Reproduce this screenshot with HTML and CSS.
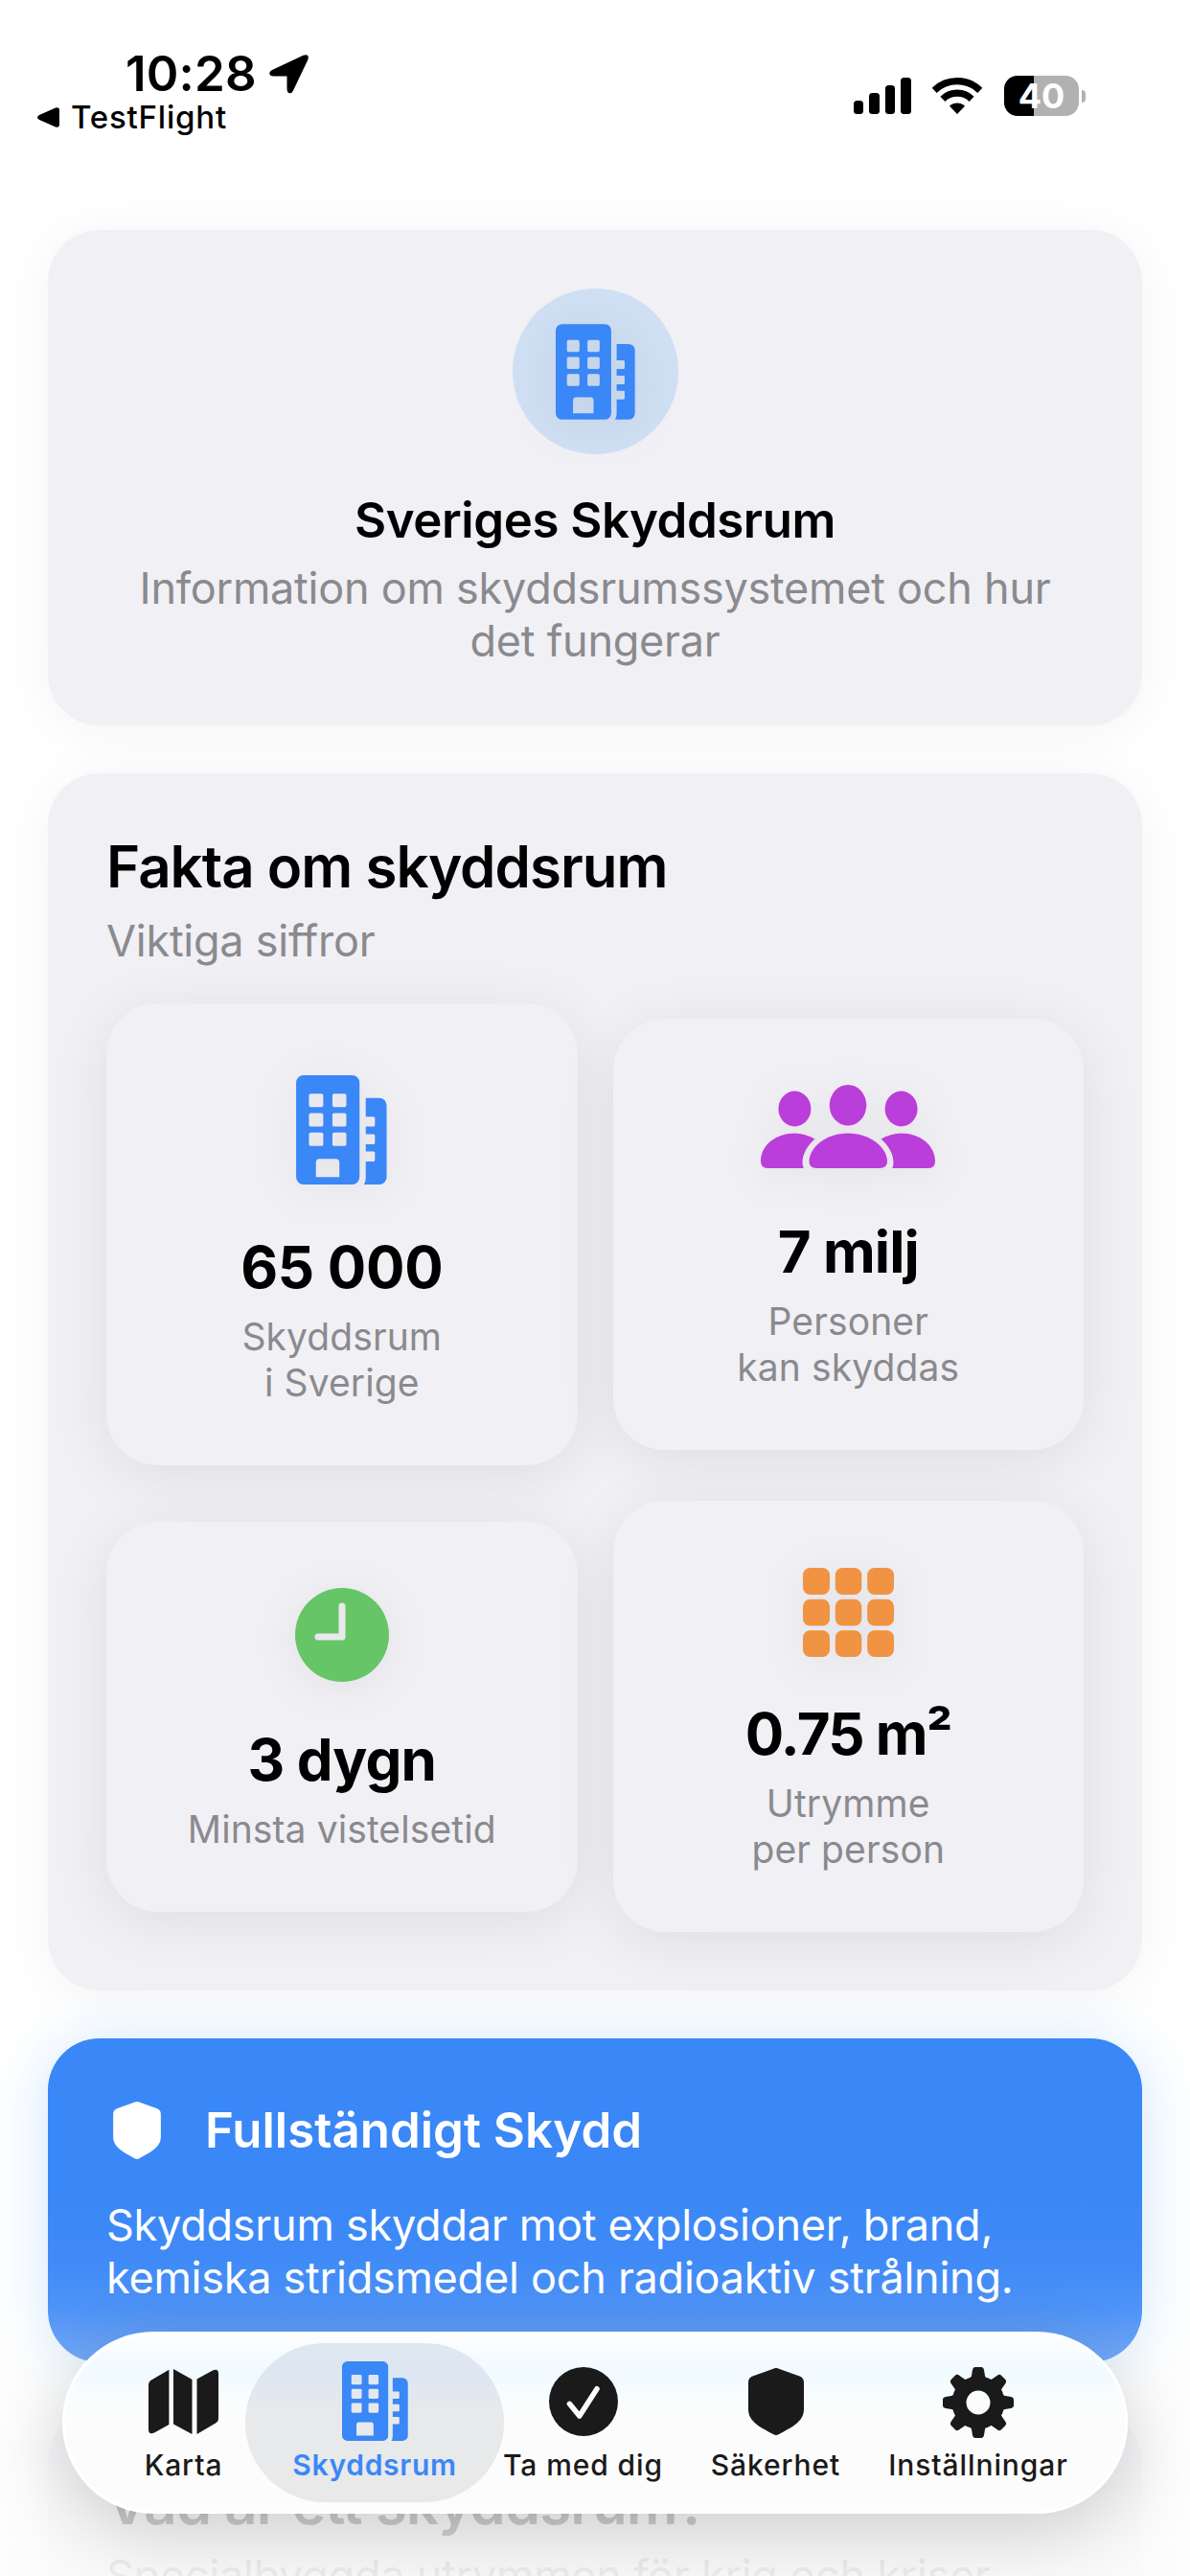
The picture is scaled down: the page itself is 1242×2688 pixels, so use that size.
FILE: index.html
```html
<!DOCTYPE html>
<html lang="sv">
<head>
<meta charset="UTF-8">
<meta name="viewport" content="width=device-width, initial-scale=1.0">
<title>Skyddsrum</title>
<link rel="stylesheet" href="styles.css">
</head>
<body>

<!-- Shared icons -->
<svg class="icon-defs">
    <symbol id="icon-building" viewBox="0 0 248 298">
        <path fill-rule="evenodd" d="M20 0H153a20 20 0 0 1 20 20V278a20 20 0 0 1-20 20H20a20 20 0 0 1-20-20V20A20 20 0 0 1 20 0ZM40 50a5 5 0 0 0-5 5v27a5 5 0 0 0 5 5h29a5 5 0 0 0 5-5v-27a5 5 0 0 0-5-5ZM104 50a5 5 0 0 0-5 5v27a5 5 0 0 0 5 5h28a5 5 0 0 0 5-5v-27a5 5 0 0 0-5-5ZM40 103a5 5 0 0 0-5 5v27a5 5 0 0 0 5 5h29a5 5 0 0 0 5-5v-27a5 5 0 0 0-5-5ZM104 103a5 5 0 0 0-5 5v27a5 5 0 0 0 5 5h28a5 5 0 0 0 5-5v-27a5 5 0 0 0-5-5ZM40 156a5 5 0 0 0-5 5v27a5 5 0 0 0 5 5h29a5 5 0 0 0 5-5v-27a5 5 0 0 0-5-5ZM104 156a5 5 0 0 0-5 5v27a5 5 0 0 0 5 5h28a5 5 0 0 0 5-5v-27a5 5 0 0 0-5-5ZM64 228a10 10 0 0 0-10 10v40h64v-40a10 10 0 0 0-10-10Z"/>
        <path d="M190 62H227a20 20 0 0 1 20 20V278a20 20 0 0 1-20 20H185q5-8 5-18V235h21a4 4 0 0 0 4-4v-19a4 4 0 0 0-4-4h-21v-20h21a4 4 0 0 0 4-4v-19a4 4 0 0 0-4-4h-21v-21h21a4 4 0 0 0 4-4v-19a4 4 0 0 0-4-4h-21Z"/>
    </symbol>
    <symbol id="icon-shield" viewBox="0 0 58 70">
        <path d="M25.500 1Q29-.8 32.500 1L53.500 8.500Q58 10.300 58 15V43C58 56 45 62 32 69Q29 70.800 26 69C13 62 0 56 0 43V15Q0 10.300 4.500 8.500Z"/>
    </symbol>
</svg>

<header class="status-bar">
    <div class="status-left">
        <div class="clock">
            <span class="time">10:28</span>
            <svg class="location" viewBox="0 0 41 41"><path d="M2.500 16.200 35.500.7Q42-1.500 40.500 5L25 37.500Q23.500 41 20.500 40 18.500 39 18.500 36V22.500H4Q1 22.500.3 20 0 17.500 2.500 16.200Z"/></svg>
        </div>
        <div class="back-app">
            <svg class="back-arrow" viewBox="0 0 23 21"><path d="M2 8 19 .5Q23-.5 23 3V18Q23 21.500 19 20.500L2 13Q-2 10.500 2 8Z"/></svg>
            <span>TestFlight</span>
        </div>
    </div>
    <div class="status-right">
        <svg class="signal" viewBox="0 0 60 38">
            <rect x="0" y="24" width="10" height="14" rx="3.500"/>
            <rect x="16" y="16" width="11" height="22" rx="3.500"/>
            <rect x="33" y="8" width="10" height="30" rx="3.500"/>
            <rect x="49" y="0" width="11" height="38" rx="3.500"/>
        </svg>
        <svg class="wifi" viewBox="0 0 52 38">
            <path class="wifi-arc" d="M2.200 13.300A34.300 34.300 0 0 1 49.800 13.300"/>
            <path class="wifi-arc" d="M10.900 22.300A21.800 21.800 0 0 1 41.100 22.300"/>
            <path d="M26 38 18 29.700A11.500 11.500 0 0 1 34 29.700Z"/>
        </svg>
        <div class="battery">40</div>
        <div class="battery-tip"></div>
    </div>
</header>

<main>
    <section class="card intro">
        <div class="intro-icon">
            <svg><use href="#icon-building"/></svg>
        </div>
        <h1>Sveriges Skyddsrum</h1>
        <p class="lead">Information om skyddsrumssystemet och hur<br>det fungerar</p>
    </section>

    <section class="card facts">
        <h2>Fakta om skyddsrum</h2>
        <p class="lead">Viktiga siffror</p>
        <div class="fact-grid">
            <div class="fact">
                <svg class="fact-building"><use href="#icon-building"/></svg>
                <strong>65 000</strong>
                <span>Skyddsrum<br>i Sverige</span>
            </div>
            <div class="fact">
                <svg class="fact-people" viewBox="0 0 182 87">
                    <ellipse cx="91" cy="21.300" rx="19.300" ry="21.300"/>
                    <path d="M58 87Q50.500 87 50.500 80C50.500 66 67 50.500 91 50.500S132 66 132 80Q132 87 124 87Z"/>
                    <g id="person">
                        <ellipse cx="35.400" cy="25" rx="17" ry="18.500"/>
                        <path d="M7 87Q0 87 0 79.500C0 63 16 50.500 35.400 50.500 43 50.500 50 53 56.500 56.500 49 63 43.500 72 43.500 81Q43.500 84.500 44.800 87Z"/>
                    </g>
                    <use href="#person" transform="matrix(-1 0 0 1 182 0)"/>
                </svg>
                <strong class="tight">7 milj</strong>
                <span>Personer<br>kan skyddas</span>
            </div>
            <div class="fact">
                <svg class="fact-clock" viewBox="0 0 98 98">
                    <circle cx="49" cy="49" r="49"/>
                    <path d="M49 19V51H24"/>
                </svg>
                <strong class="tight">3 dygn</strong>
                <span>Minsta vistelsetid</span>
            </div>
            <div class="fact">
                <svg class="fact-area" viewBox="0 0 95 93">
                    <rect x="0" y="0" width="28" height="28" rx="7.500"/>
                    <rect x="33.800" y="0" width="27.500" height="28" rx="7.500"/>
                    <rect x="67.200" y="0" width="27.800" height="28" rx="7.500"/>
                    <rect x="0" y="32.700" width="28" height="27.700" rx="7.500"/>
                    <rect x="33.800" y="32.700" width="27.500" height="27.700" rx="7.500"/>
                    <rect x="67.200" y="32.700" width="27.800" height="27.700" rx="7.500"/>
                    <rect x="0" y="65.300" width="28" height="27.700" rx="7.500"/>
                    <rect x="33.800" y="65.300" width="27.500" height="27.700" rx="7.500"/>
                    <rect x="67.200" y="65.300" width="27.800" height="27.700" rx="7.500"/>
                </svg>
                <strong class="tighter">0.75 m²</strong>
                <span>Utrymme<br>per person</span>
            </div>
        </div>
    </section>

    <section class="card protection">
        <div class="protection-title">
            <svg><use href="#icon-shield"/></svg>
            <h3>Fullständigt Skydd</h3>
        </div>
        <p>Skyddsrum skyddar mot explosioner, brand,<br>kemiska stridsmedel och radioaktiv strålning.</p>
    </section>

    <section class="card about">
        <h2>Vad är ett skyddsrum?</h2>
        <p class="lead">Specialbyggda utrymmen för krig och kriser</p>
    </section>
</main>

<div class="bottom-fade"></div>

<nav class="tab-bar">
    <a class="tab">
        <svg class="tab-map" viewBox="0 0 73 68">
            <path d="M21.400.7V58L6 66.500Q0 69 0 63V17Q0 13 3 11.500Z"/>
            <path d="M26 0 45.500 11V68L26 57.500Z"/>
            <path d="M50.500 10.500 67 1.500Q73-1 73 5V51Q73 55 70 56.500L50.500 68Z"/>
        </svg>
        <span>Karta</span>
    </a>
    <a class="tab active">
        <svg class="tab-building"><use href="#icon-building"/></svg>
        <span>Skyddsrum</span>
    </a>
    <a class="tab">
        <svg class="tab-check" viewBox="0 0 72 72">
            <circle cx="36" cy="36" r="36"/>
            <path d="M21.400 38.300 31.800 51 50 22.700"/>
        </svg>
        <span>Ta med dig</span>
    </a>
    <a class="tab">
        <svg class="tab-shield"><use href="#icon-shield"/></svg>
        <span>Säkerhet</span>
    </a>
    <a class="tab">
        <svg class="tab-gear" viewBox="0 0 74 74">
            <circle cx="37" cy="37" r="20" fill="none" stroke="#1a1a1a" stroke-width="15"/>
            <g id="teeth">
                <path id="tooth" d="M27 14Q29.500 12 30 9L31 3Q31.600 0 34 0H40Q42.400 0 43 3L44 9Q44.500 12 47 14Z"/>
                <use href="#tooth" transform="rotate(45 37 37)"/>
                <use href="#tooth" transform="rotate(90 37 37)"/>
                <use href="#tooth" transform="rotate(135 37 37)"/>
            </g>
            <use href="#teeth" transform="rotate(180 37 37)"/>
        </svg>
        <span>Inställningar</span>
    </a>
</nav>

</body>
</html>
```
FILE: styles.css
```css
* {
    box-sizing: border-box;
}

body {
    position: relative;
    width: 1242px;
    height: 2688px;
    margin: 0;
    overflow: hidden;
    background-color: #fff;
    color: #000;
    font-family: Inter, "Liberation Sans", sans-serif;
}

h1, h2, h3, p {
    margin: 0;
}

svg {
    display: block;
    flex-shrink: 0;
}

.icon-defs {
    display: none;
}

/* Status bar */
.status-bar {
    display: flex;
    justify-content: space-between;
    height: 240px;
    padding: 46px 109px 0 39px;
}

.clock {
    display: flex;
    gap: 13px;
    padding-left: 92px;
}

.time {
    font-size: 51px;
    font-weight: 600;
    line-height: 62px;
    letter-spacing: 0.2px;
}

.location {
    width: 41px;
    height: 41px;
    margin-top: 11px;
}

.back-app {
    display: flex;
    align-items: center;
    gap: 12px;
    margin-top: -7px;
    font-size: 33px;
    font-weight: 500;
    line-height: 42px;
    letter-spacing: 0.8px;
}

.back-arrow {
    width: 23px;
    height: 21px;
}

.status-right {
    display: flex;
    align-items: center;
    height: 42px;
    margin-top: 33px;
}

.signal {
    width: 60px;
    height: 38px;
    margin-right: 22px;
}

.wifi {
    width: 52px;
    height: 38px;
    margin-right: 23px;
}

.wifi-arc {
    fill: none;
    stroke: #000;
    stroke-width: 7.2;
}

.battery {
    width: 78px;
    height: 42px;
    border-radius: 14px;
    background: linear-gradient(90deg, #000 31px, #b1b1b1 31px);
    color: #fff;
    font-size: 36px;
    font-weight: 700;
    line-height: 43px;
    text-align: center;
}

.battery-tip {
    width: 4px;
    height: 13px;
    margin-left: 3px;
    border-radius: 0 4px 4px 0;
    background-color: #b1b1b1;
}

/* Cards */
main {
    display: flex;
    flex-direction: column;
    gap: 50px;
    padding: 0 50px;
}

.card {
    padding: 61px 61px;
    border-radius: 54px;
    background-color: #f1f0f5;
    box-shadow: 0 6px 60px rgba(0, 0, 0, 0.05);
}

h1, h3 {
    font-size: 51px;
    font-weight: 600;
    line-height: 62px;
}

h1 {
    letter-spacing: -0.45px;
}

h2 {
    font-size: 60px;
    font-weight: 600;
    line-height: 72px;
    letter-spacing: -1px;
}

.lead {
    color: #8a8a8e;
    font-size: 45px;
    line-height: 55px;
    letter-spacing: -0.25px;
}

.intro {
    height: 517px;
    text-align: center;
}

.intro .lead {
    margin-top: 12px;
}

.intro-icon {
    display: flex;
    align-items: center;
    justify-content: center;
    width: 173px;
    height: 173px;
    margin: 0 auto 38px;
    border-radius: 50%;
    background-color: #cfdff4;
}

.intro-icon svg {
    width: 83px;
    height: 100px;
    fill: #3a87f7;
    filter: drop-shadow(0 6px 24px rgba(0, 0, 0, 0.07));
}

/* Facts */
.facts .lead {
    margin: 14px 0 38px;
}

.fact-grid {
    display: grid;
    grid-template-columns: 1fr 1fr;
    gap: 37px;
    align-items: center;
}

.fact {
    display: flex;
    flex-direction: column;
    align-items: center;
    padding: 62px 0;
    border-radius: 54px;
    background-color: #f1f0f5;
    box-shadow: 0 10px 60px rgba(0, 0, 0, 0.08);
    text-align: center;
}

.fact svg {
    filter: drop-shadow(0 6px 22px rgba(0, 0, 0, 0.06));
}

.fact strong {
    margin-bottom: 13px;
    font-size: 60px;
    font-weight: 700;
    line-height: 72px;
    letter-spacing: -0.3px;
}

.fact .tight {
    letter-spacing: -0.9px;
}

.fact .tighter {
    letter-spacing: -1.6px;
}

.fact span {
    color: #8a8a8e;
    font-size: 39px;
    line-height: 48px;
    letter-spacing: 0.1px;
}

.fact-building {
    width: 95px;
    height: 114px;
    margin: 13px 0 50px;
    fill: #3a87f7;
}

.fact-people {
    width: 182px;
    height: 87px;
    margin: 7px 0 51px;
    fill: #ba3eda;
}

.fact-clock {
    width: 98px;
    height: 98px;
    margin: 7px 0 45px;
    fill: #66c567;
}

.fact-clock path {
    fill: none;
    stroke: #e9e9ed;
    stroke-width: 7;
    stroke-linecap: round;
    stroke-linejoin: round;
}

.fact-area {
    width: 95px;
    height: 93px;
    margin: 8px 0 44px;
    fill: #f09343;
}

/* Blue card */
.protection {
    height: 338px;
    background-color: #3a87f7;
    box-shadow: 0 6px 60px rgba(58, 150, 247, 0.25);
    color: #fff;
}

.protection-title {
    display: flex;
    align-items: center;
    gap: 46px;
    height: 70px;
    margin-bottom: 36px;
    padding-left: 7px;
}

.protection-title svg {
    width: 50px;
    height: 60px;
    fill: #fff;
}

.protection p {
    font-size: 45px;
    line-height: 55px;
    letter-spacing: -0.25px;
    white-space: nowrap;
}

.about .lead {
    margin-top: 12px;
}

.bottom-fade {
    position: absolute;
    right: 0;
    bottom: 0;
    left: 0;
    height: 400px;
    background: linear-gradient(rgba(252, 252, 252, 0), rgba(252, 252, 252, 0.03) 18%, rgba(252, 252, 252, 0.1) 30%, rgba(252, 252, 252, 0.3) 44%, rgba(252, 252, 252, 0.81) 85%, rgba(252, 252, 252, 0.87));
}

/* Tab bar */
.tab-bar {
    position: absolute;
    top: 2433px;
    left: 65px;
    display: grid;
    grid-template-columns: 129px 270px 165px 237px 186px;
    width: 1112px;
    height: 190px;
    padding: 9px 59px;
    border: 3px solid #fff;
    border-radius: 95px;
    background: linear-gradient(#fdfefe, #f0faff 20%, #fafdfe 38%, #fcfcfc 50%);
    box-shadow: 0 20px 80px rgba(0, 0, 0, 0.18);
}

.tab {
    display: flex;
    flex-direction: column;
    align-items: center;
    justify-content: flex-end;
    height: 166px;
    padding-bottom: 21px;
    border-radius: 83px;
    color: #1a1a1a;
    font-size: 30px;
    font-weight: 500;
    line-height: 36px;
    letter-spacing: 0.9px;
    white-space: nowrap;
}

.tab svg {
    fill: #1a1a1a;
}

.tab.active {
    background: linear-gradient(#e0e7ef, #dde7f2 22%, #e7e9eb 42%, #e9e9e9);
    color: #3a87f7;
    font-weight: 600;
    letter-spacing: 0.7px;
}

.tab-map {
    width: 73px;
    height: 68px;
    margin-bottom: 14px;
}

.tab .tab-building {
    width: 69px;
    height: 83px;
    margin-bottom: 7px;
    fill: #3a87f7;
}

.tab-check {
    width: 72px;
    height: 72px;
    margin-bottom: 12px;
}

.tab-check path {
    fill: none;
    stroke: #fafdfe;
    stroke-width: 5.5;
    stroke-linecap: round;
    stroke-linejoin: round;
}

.tab-shield {
    width: 58px;
    height: 70px;
    margin-bottom: 13px;
}

.tab-gear {
    width: 74px;
    height: 74px;
    margin-bottom: 10px;
}
```
